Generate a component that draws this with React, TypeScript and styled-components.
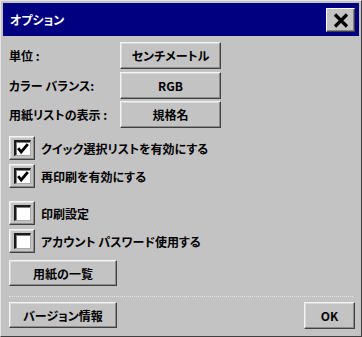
import React from "react";
import styled, { createGlobalStyle } from "styled-components";

const Global = createGlobalStyle`
  html, body { margin: 0; padding: 0; background: #c3c3c3; }
  body {
    font-family: "Noto Sans CJK JP", "Noto Sans", sans-serif;
    font-feature-settings: "palt";
  }
  * { box-sizing: border-box; }
`;

const Window = styled.div`
  width: 362px;
  height: 337px;
  background: #c3c3c3;
  border-top: 1px solid #e4e4e4;
  border-left: 1px solid #e4e4e4;
  border-right: 1px solid #404040;
  border-bottom: 1px solid #404040;
  padding: 2px 2px 0 2px;
  display: flex;
  flex-direction: column;
`;

const TitleBar = styled.div`
  height: 33px;
  background: #000080;
  display: flex;
  align-items: center;
  justify-content: space-between;
  padding: 0 4px 0 7px;
  flex-shrink: 0;
`;

const Title = styled.span`
  color: #ffffff;
  font-size: 12px;
  font-weight: 600;
`;

const CloseButton = styled.button`
  width: 29px;
  height: 24px;
  margin-top: 1px;
  padding: 0;
  background: #c3c3c3;
  border-top: 1px solid #ffffff;
  border-left: 1px solid #ffffff;
  border-right: 1px solid #404040;
  border-bottom: 1px solid #404040;
  box-shadow: inset -1px -1px 0 #808080;
  display: flex;
  align-items: center;
  justify-content: center;
`;

const Body = styled.div`
  flex: 1;
  padding: 6px 4px 0 6px;
  display: flex;
  flex-direction: column;
`;

const Settings = styled.div`
  display: flex;
  flex-direction: column;
  gap: 2.5px;
`;

const SettingRow = styled.div`
  display: flex;
  align-items: center;
  height: 27px;
`;

const Label = styled.span`
  width: 111px;
  font-size: 12px;
  font-weight: 600;
  color: #000;
  white-space: pre;
`;

const Button = styled.button<{ $w: number; $h?: number }>`
  width: ${(p) => p.$w}px;
  height: ${(p) => p.$h ?? 27}px;
  padding: 0;
  background: #c3c3c3;
  border-top: 1px solid #f4f4f4;
  border-left: 1px solid #f4f4f4;
  border-right: 1px solid #404040;
  border-bottom: 1px solid #404040;
  box-shadow: inset -1px -1px 0 #8c8c8c, inset 1px 1px 0 #d8d8d8;
  font-family: "Noto Sans CJK JP", "Noto Sans", sans-serif;
  font-feature-settings: "palt";
  font-size: 12px;
  font-weight: 600;
  color: #000;
  display: flex;
  align-items: center;
  justify-content: center;
`;

const CheckGroup = styled.div<{ $top: number }>`
  display: flex;
  flex-direction: column;
  gap: 4px;
  margin-top: ${(p) => p.$top}px;
`;

const CheckRow = styled.div`
  display: flex;
  align-items: center;
  gap: 6px;
  height: 24px;
`;

const CheckOuter = styled.div`
  width: 26px;
  height: 24px;
  background: #c3c3c3;
  border-top: 1px solid #f4f4f4;
  border-left: 1px solid #f4f4f4;
  border-right: 1px solid #404040;
  border-bottom: 1px solid #404040;
  box-shadow: inset -1px -1px 0 #8c8c8c, inset 1px 1px 0 #e0e0e0;
  display: flex;
  align-items: center;
  justify-content: center;
`;

const CheckInner = styled.div`
  width: 17px;
  height: 16px;
  background: #ffffff;
  border-top: 2px solid #1a1a1a;
  border-left: 2px solid #1a1a1a;
  border-right: 1px solid #a8a8a8;
  border-bottom: 1px solid #a8a8a8;
  box-shadow: inset 1px 1px 0 #808080;
  display: flex;
  align-items: center;
  justify-content: center;
`;

const CheckLabel = styled.span`
  font-size: 12px;
  font-weight: 600;
  color: #000;
`;

const Separator = styled.div`
  height: 0;
  border-top: 1px dotted #e2e2e2;
  margin: 10px 2px 5px 0;
`;

const Footer = styled.div`
  display: flex;
  justify-content: space-between;
  align-items: flex-start;
`;

const Spacer = styled.div`
  height: 7px;
`;

const Check = () => (
  <svg width="12" height="11" viewBox="0 0 12 11">
    <path d="M1.2 5.2 L4.2 9 L10.8 1.2" fill="none" stroke="#000" strokeWidth="2.8" strokeLinejoin="miter" />
  </svg>
);

const CheckItem = ({ label, checked }: { label: string; checked?: boolean }) => (
  <CheckRow>
    <CheckOuter>
      <CheckInner>{checked && <Check />}</CheckInner>
    </CheckOuter>
    <CheckLabel>{label}</CheckLabel>
  </CheckRow>
);

export default function App() {
  return (
    <>
      <Global />
      <Window>
        <TitleBar>
          <Title>オプション</Title>
          <CloseButton>
            <svg width="16" height="15" viewBox="0 0 16 15">
              <path d="M2 1.5 L14 13.5 M14 1.5 L2 13.5" stroke="#000" strokeWidth="3.2" strokeLinecap="butt" />
            </svg>
          </CloseButton>
        </TitleBar>
        <Body>
          <Settings>
            <SettingRow>
              <Label>{"単位 :"}</Label>
              <Button $w={101}>センチメートル</Button>
            </SettingRow>
            <SettingRow>
              <Label>カラー バランス:</Label>
              <Button $w={101}>RGB</Button>
            </SettingRow>
            <SettingRow>
              <Label>{"用紙リストの表示 :"}</Label>
              <Button $w={101}>規格名</Button>
            </SettingRow>
          </Settings>
          <CheckGroup $top={8}>
            <CheckItem label="クイック選択リストを有効にする" checked />
            <CheckItem label="再印刷を有効にする" checked />
          </CheckGroup>
          <CheckGroup $top={13}>
            <CheckItem label="印刷設定" />
            <CheckItem label="アカウント パスワード使用する" />
          </CheckGroup>
          <Spacer />
          <Button $w={108} $h={26}>用紙の一覧</Button>
          <Separator />
          <Footer>
            <Button $w={108} $h={26}>バージョン情報</Button>
            <Button $w={51} $h={27}>OK</Button>
          </Footer>
        </Body>
      </Window>
    </>
  );
}
